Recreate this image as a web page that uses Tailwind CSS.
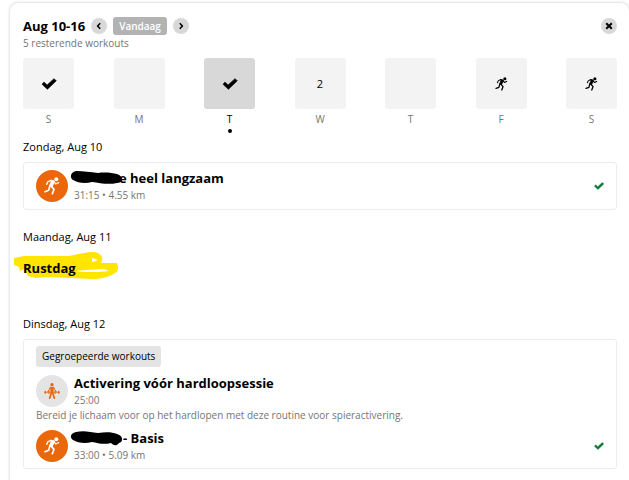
<!DOCTYPE html>
<html lang="nl">
  <head>
    <meta charset="UTF-8" />
    <meta name="viewport" content="width=device-width, initial-scale=1.0" />
    <title>Workouts</title>
    <script src="https://cdn.jsdelivr.net/npm/@tailwindcss/browser@4"></script>
  </head>
  <body class="bg-white font-['Open_Sans','Noto_Sans',sans-serif] text-black overflow-hidden">
    <!-- Shared icons -->
    <svg class="hidden">
      <symbol id="runner" viewBox="0 0 48 54">
        <circle cx="37" cy="7" r="6" fill="currentColor" />
        <path d="M19 8 L31 10 L32 16 L25 31 L14 28 L20 15 Z" fill="currentColor" />
        <path
          d="M22 10 L12 14 L8 22 M30 13 L35 21 L44 17"
          fill="none" stroke="currentColor" stroke-width="4" stroke-linecap="round" stroke-linejoin="round"
        />
        <path
          d="M22 28 L30 37 L25 50 M17 29 L14 40 L3 44"
          fill="none" stroke="currentColor" stroke-width="5" stroke-linecap="round" stroke-linejoin="round"
        />
      </symbol>
      <symbol id="check" viewBox="0 0 48 38">
        <path d="M2 20 L8 13 L18 22 L40 2 L47 9 L19 36 Z" fill="currentColor" stroke="currentColor" stroke-width="2" stroke-linejoin="round" />
      </symbol>
    </svg>

    <main class="mt-[3px] ml-[10px] min-h-screen rounded-t-lg bg-white pt-3.5 pr-3 pl-[13px] shadow-[0_0_3px_rgba(0,0,0,0.25)]">
      <header class="flex items-center">
        <h1 class="text-[13px] leading-4 font-bold">Aug 10-16</h1>
        <button class="ml-1.5 flex size-4 items-center justify-center rounded-full bg-[#d8d8d8]" aria-label="Vorige week">
          <svg class="size-2" viewBox="0 0 8 8" fill="none" stroke="currentColor" stroke-width="1.5"><path d="M5.2 1.2 L2.6 4 L5.2 6.8" /></svg>
        </button>
        <button class="mx-1.5 h-[18px] rounded-[3px] bg-[#b3b3b3] px-1.5 text-[10px] leading-4 font-semibold text-white">Vandaag</button>
        <button class="flex size-4 items-center justify-center rounded-full bg-[#d8d8d8]" aria-label="Volgende week">
          <svg class="size-2" viewBox="0 0 8 8" fill="none" stroke="currentColor" stroke-width="1.5"><path d="M2.8 1.2 L5.4 4 L2.8 6.8" /></svg>
        </button>
        <button class="ml-auto flex size-4 items-center justify-center rounded-full bg-[#d8d8d8]" aria-label="Sluiten">
          <svg class="size-2" viewBox="0 0 8 8" fill="none" stroke="currentColor" stroke-width="2"><path d="M1.2 1.2 L6.8 6.8 M6.8 1.2 L1.2 6.8" /></svg>
        </button>
      </header>
      <p class="text-[10px] leading-4 text-[#757575]">5 resterende workouts</p>

      <!-- Week -->
      <ul class="mt-[7px] flex justify-between text-center text-[10px] leading-4 text-[#757575]">
        <li>
          <div class="mb-0.5 flex size-[51px] items-center justify-center rounded-[3px] bg-[#f3f3f3] text-black">
            <svg class="h-3 w-4"><use href="#check" /></svg>
          </div>
          S
        </li>
        <li>
          <div class="mb-0.5 size-[51px] rounded-[3px] bg-[#f3f3f3]"></div>
          M
        </li>
        <li class="text-black">
          <div class="mb-0.5 flex size-[51px] items-center justify-center rounded-[3px] bg-[#d8d8d8]">
            <svg class="h-3 w-4"><use href="#check" /></svg>
          </div>
          T
          <div class="mx-auto mt-0.5 size-1 rounded-full bg-black"></div>
        </li>
        <li>
          <div class="mb-0.5 flex size-[51px] items-center justify-center rounded-[3px] bg-[#f3f3f3] text-[11px] text-black">2</div>
          W
        </li>
        <li>
          <div class="mb-0.5 size-[51px] rounded-[3px] bg-[#f3f3f3]"></div>
          T
        </li>
        <li>
          <div class="mb-0.5 flex size-[51px] items-center justify-center rounded-[3px] bg-[#f3f3f3] text-black">
            <svg class="h-3.5 w-[13px]"><use href="#runner" /></svg>
          </div>
          F
        </li>
        <li>
          <div class="mb-0.5 flex size-[51px] items-center justify-center rounded-[3px] bg-[#f3f3f3] text-black">
            <svg class="h-3.5 w-[13px]"><use href="#runner" /></svg>
          </div>
          S
        </li>
      </ul>

      <section class="mt-1.5">
        <h2 class="text-[11px] leading-4">Zondag, Aug 10</h2>
        <div class="mt-[7px] flex items-center rounded-[3px] border border-[#ececec] px-3 py-[7px]">
          <div class="flex size-8 items-center justify-center rounded-full bg-[#ea670c] text-white">
            <svg class="h-[18px] w-4"><use href="#runner" /></svg>
          </div>
          <div class="-mb-0.5 ml-1.5">
            <h3 class="flex text-[13px] leading-4 font-bold">
              <svg class="relative z-10 -mx-1 h-4 w-[53px]" viewBox="0 0 53 16" aria-hidden="true">
                <path d="M6 1 C14 1 20 2 28 3 C36 2 42 3 47 4 C54 6 53 13 47 13 C38 15 30 13 22 12 C15 14 8 13 3 10 C-1 7 1 2 6 1 Z" />
              </svg>
              e heel langzaam
            </h3>
            <p class="text-[10px] leading-[18px] text-[#757575]">31:15 • 4.55 km</p>
          </div>
          <svg class="ml-auto h-2 w-2.5 text-[#0a7a35]" role="img" aria-label="Voltooid"><use href="#check" /></svg>
        </div>
      </section>

      <section class="mt-[19px]">
        <h2 class="text-[11px] leading-4">Maandag, Aug 11</h2>
        <div class="relative mt-[15px]">
          <!-- Marker stroke behind the rest day -->
          <svg class="absolute -top-2 -left-[9px] h-[27px] w-[105px]" viewBox="0 0 105 27" aria-hidden="true">
            <path
              fill="#ffe500" fill-rule="evenodd"
              d="M0 6 L10 4 L55 4 C65 2 73 0 80 0 C86 1 89 4 88 8 L87 11 L103 11 C105 15 104 20 101 21 C95 25 87 27 78 27 L56 26 L32 25 L22 26 L14 24 L10 17 L6 19 L5 15 L0 13 Z M78 6 L84 8 L79 10 L78 9 Z M62 19 L71 18 L90 17 L95 19 L84 20 L67 20 Z"
            />
          </svg>
          <h3 class="relative text-[13px] leading-4 font-bold">Rustdag</h3>
        </div>
      </section>

      <section class="mt-10">
        <h2 class="text-[11px] leading-4">Dinsdag, Aug 12</h2>
        <div class="mt-[7px] rounded-[3px] border border-[#ececec] px-3 py-1.5">
          <p class="flex h-[21px] w-fit items-center rounded-[3px] bg-[#e4e4e4] px-1.5 text-[10px]">Gegroepeerde workouts</p>
          <div class="mt-2 flex items-center">
            <div class="flex size-8 items-center justify-center rounded-full bg-[#e4e4e4] text-[#ea670c]">
              <svg class="size-4" viewBox="0 0 48 48" fill="none" stroke="currentColor" stroke-linecap="round" stroke-linejoin="round">
                <circle cx="24" cy="5" r="5" fill="currentColor" stroke="none" />
                <path d="M19 12 H29 L28 30 H20 Z" fill="currentColor" />
                <path d="M19 13 L15 21 L10 28 M29 13 L33 21 L38 28" stroke-width="3" />
                <path d="M22 29 L17 46 M26 29 L31 46" stroke-width="5" />
                <path d="M1 28 H16 M32 28 H47" stroke-width="2" />
                <path d="M4 25 V31 M44 25 V31 M15 25 V31 M33 25 V31" stroke-width="4" />
              </svg>
            </div>
            <div class="-mb-0.5 ml-1.5">
              <h3 class="text-[13px] leading-4 font-bold">Activering vóór hardloopsessie</h3>
              <p class="text-[10px] leading-[18px] text-[#757575]">25:00</p>
            </div>
          </div>
          <p class="text-[10px] leading-4 text-[#757575]">Bereid je lichaam voor op het hardlopen met deze routine voor spieractivering.</p>
          <div class="mt-[7px] flex items-center">
            <div class="flex size-8 items-center justify-center rounded-full bg-[#ea670c] text-white">
              <svg class="h-[18px] w-4"><use href="#runner" /></svg>
            </div>
            <div class="-mb-0.5 ml-1.5">
              <h3 class="flex text-[13px] leading-4 font-bold">
                <svg class="relative z-10 -ml-1 h-4 w-[53px]" viewBox="0 0 53 16" aria-hidden="true">
                  <path d="M6 2 C14 0 20 2 28 3 C36 2 42 2 47 4 C54 6 53 12 49 13 C46 17 43 15 41 13 C33 15 28 13 22 12 C15 14 8 13 3 10 C-1 7 1 3 6 2 Z" />
                </svg>
                - Basis
              </h3>
              <p class="text-[10px] leading-[18px] text-[#757575]">33:00 • 5.09 km</p>
            </div>
            <svg class="ml-auto h-2 w-2.5 text-[#0a7a35]" role="img" aria-label="Voltooid"><use href="#check" /></svg>
          </div>
        </div>
      </section>
    </main>
  </body>
</html>
